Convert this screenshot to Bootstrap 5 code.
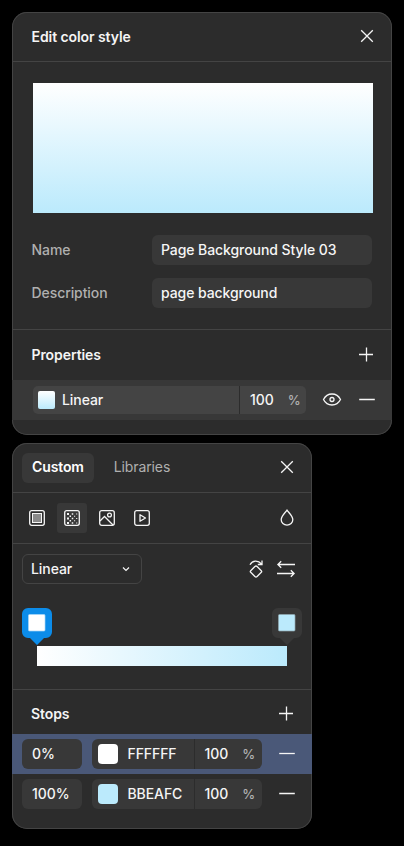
<!DOCTYPE html>
<html lang="en">
<head>
<meta charset="utf-8">
<meta name="viewport" content="width=device-width, initial-scale=1">
<title>Edit color style</title>
<link href="https://cdn.jsdelivr.net/npm/bootstrap@5.3.0/dist/css/bootstrap.min.css" rel="stylesheet">
<style>
body{background:#000;color:#f5f5f5;font:500 14px/20px Inter,sans-serif;letter-spacing:-.08px;overflow:hidden}
.panel{background:#2c2c2c;padding:1px;box-shadow:inset 0 0 0 1px #444;border-radius:15px;overflow:hidden}
.panel-style{width:380px;height:423px}
.panel-picker{width:300px;height:386px}
.line{border-bottom:1px solid #444}
.bold{font-weight:600}
.muted{color:#b0b0b0}
.pct{color:#b0b0b0;font-size:13px;margin-left:14px}
.ico{width:30px;height:30px;flex:none;display:flex;align-items:center;justify-content:center;background:none;border:0;padding:0;border-radius:3px;color:#f5f5f5}
.ico svg{width:20px;height:20px;fill:none;stroke:currentColor;stroke-width:1.3;display:block}
.ico.on,.tab.on,.field,.num{background:#383838}
.h49{height:49px}.h50{height:50px}.h51{height:51px}
.preview{height:130px;margin:21px 18px 22px 20px;background:linear-gradient(#fff,#bbeafc)}
.field{width:220px;height:30px;border-radius:6px;padding:5px 9px;margin-right:19px}
.tab{height:30px;border:0;border-radius:6px;background:none;padding:4px 10px 6px;letter-spacing:-.12px}
.prop{height:40px;background:#383838;padding-left:21px;margin:0 -1px}
.group{display:flex;border-radius:5px;overflow:hidden}
.group>div{display:flex;align-items:center}
.prop .group{width:273px;height:28px;background:#444}
.prop .name{width:207px;border-right:1px solid #2c2c2c;padding-left:5px}
.swatch{border-radius:2px;flex:none}
.prop .swatch{width:17px;height:18px;background:linear-gradient(#fff,#bbeafc);margin-right:7px}
.pick{width:120px;height:30px;border:1px solid #444;border-radius:6px;padding:0 10px 0 8px}
.pick svg{width:10px;height:10px;fill:none;stroke:#f5f5f5;stroke-width:1.2}
.pins{height:38px;margin-top:14px;padding:0 9px}
.pin{width:30px;height:37px;color:#383838}
.pin.on{color:#0c8ce9}
.ramp{height:20px;width:250px;margin-left:24px;background:linear-gradient(90deg,#fff,#bbeafc)}
.stop{height:40px;padding:0 10px;margin:0 -1px}
.stop.on{background:#4a5878}
.num{width:60px;height:30px;border-radius:6px;padding:5px 10px;margin-right:10px}
.stop .group{width:170px;height:30px;background:#383838;border-radius:6px}
.stop .name{width:103px;border-right:1px solid #2c2c2c;padding-left:6px}
.stop .swatch{width:20px;height:20px;border-radius:4px;margin-right:9.5px}
.sw-a{background:#fff}.sw-b{background:#bbeafc}
</style>
<script src="https://cdn.jsdelivr.net/npm/bootstrap@5.3.0/dist/js/bootstrap.bundle.min.js"></script>
</head>
<body>
<main class="d-flex flex-column" style="padding:12px;gap:8px">
<section class="panel panel-style">
  <header class="line d-flex align-items-center justify-content-between h49" style="padding:0 9px 0 18.500px">
    <span class="bold">Edit color style</span>
    <button class="ico" aria-label="Close"><svg viewBox="0 0 20 20"><path d="M4.200 3.200l11.600 11.600M15.800 3.200L4.200 14.800"/></svg></button>
  </header>
  <div class="preview"></div>
  <div class="d-flex align-items-center justify-content-between" style="margin-left:18.500px"><span class="muted">Name</span><div class="field">Page Background Style 03</div></div>
  <div class="d-flex align-items-center justify-content-between" style="margin:13px 0 0 18.500px"><span class="muted">Description</span><div class="field">page background</div></div>
  <div class="line" style="height:22px"></div>
  <div class="d-flex align-items-center justify-content-between h50" style="padding:0 10px 0 18.500px">
    <span class="bold">Properties</span>
    <button class="ico" aria-label="Add"><svg viewBox="0 0 20 20"><path d="M3 9.500h14M10.500 2.500v14"/></svg></button>
  </div>
  <div class="prop d-flex align-items-center">
    <div class="group"><div class="name"><span class="swatch"></span>Linear</div><div style="padding-left:10px"><span>100</span><span class="pct">%</span></div></div>
    <button class="ico" style="margin-left:11px" aria-label="Hide"><svg viewBox="0 0 20 20"><path d="M1.500 9.500C3.300 5.900 6.300 4 10 4s6.700 1.900 8.500 5.500C16.700 13.100 13.700 15 10 15s-6.700-1.900-8.500-5.500z"/><circle cx="10" cy="9.500" r="2"/></svg></button>
    <button class="ico" style="margin-left:5px" aria-label="Remove"><svg viewBox="0 0 20 20"><path d="M2.200 9.500h15.600"/></svg></button>
  </div>
</section>

<section class="panel panel-picker">
  <header class="line d-flex align-items-center h49" style="padding:0 9px">
    <button class="tab on bold text-white">Custom</button>
    <button class="tab muted" style="margin-left:10px">Libraries</button>
    <button class="ico ms-auto" aria-label="Close"><svg viewBox="0 0 20 20"><path d="M4.200 3.200l11.600 11.600M15.800 3.200L4.200 14.800"/></svg></button>
  </header>
  <div class="line d-flex align-items-center h51" style="padding:0 9px;gap:5px">
    <button class="ico" aria-label="Solid"><svg viewBox="0 0 20 20"><rect x="2.700" y="2.700" width="14.600" height="14.600" rx="2"/><rect x="5.500" y="5.500" width="9" height="9" fill="#8a8a8a" stroke-width="1"/></svg></button>
    <button class="ico on" aria-label="Gradient"><svg viewBox="0 0 20 20"><rect x="2.700" y="2.700" width="14.600" height="14.600" rx="2"/><path stroke-width="2" stroke-dasharray="2 2.500" d="M6 5v11"/><path stroke-width="1.500" stroke-dasharray="1.500 3" d="M8.300 7.500v8M10.500 5.200v10.600"/><path stroke-width="1.100" stroke-dasharray="1.100 3.400" d="M12.600 7.700v8M14.700 5.400v10.600"/></svg></button>
    <button class="ico" aria-label="Image"><svg viewBox="0 0 20 20"><rect x="2.700" y="2.700" width="14.600" height="14.600" rx="2"/><circle cx="12.500" cy="7" r="1.900"/><path d="M3 13l4.500-4.500 8.500 8.500"/></svg></button>
    <button class="ico" aria-label="Video"><svg viewBox="0 0 20 20"><rect x="2.700" y="2.700" width="14.600" height="14.600" rx="2"/><path stroke-linejoin="round" d="M8 6.700v6.600l5.500-3.300z"/></svg></button>
    <button class="ico ms-auto" aria-label="Blend mode"><svg viewBox="0 0 20 20"><path d="M10 2.200C8 5 4.200 8 4.200 11.700a5.800 5.500 0 0 0 11.600 0C15.800 8 12 5 10 2.200z"/></svg></button>
  </div>
  <div class="d-flex align-items-center" style="height:50px;padding:0 10px 0 9px">
    <div class="pick d-flex align-items-center justify-content-between">Linear<svg viewBox="0 0 10 10"><path d="M2 3.500l3 3 3-3"/></svg></div>
    <button class="ico ms-auto" aria-label="Rotate"><svg viewBox="0 0 20 20"><path stroke-linejoin="round" d="M8.900 7.500q1.100-1 2.200 0l4.200 4.200q.8.800 0 1.600l-4.200 4.200q-1.100 1-2.200 0l-4.200-4.200q-.8-.8 0-1.600z"/><path d="M4 5.700C6.500 1.200 12 .8 15.500 5M16 1.500v4h-4.200"/></svg></button>
    <button class="ico" aria-label="Flip"><svg viewBox="0 0 20 20"><path d="M19 5.500H2M5.200 2.200L1.900 5.500l3.300 3.300M1 14.500h17M14.800 11.200l3.300 3.300-3.300 3.300"/></svg></button>
  </div>
  <div class="pins d-flex justify-content-between">
    <svg class="pin on" viewBox="0 0 30 37"><path fill="currentColor" d="M6 0h18a6 6 0 0 1 6 6v18a6 6 0 0 1-6 6h-2l-7 7-7-7H6a6 6 0 0 1-6-6V6a6 6 0 0 1 6-6z"/><rect x="6.500" y="6.500" width="16.500" height="16.500" rx="1" fill="#fff" stroke="#a9d7f8" stroke-width=".7"/></svg>
    <svg class="pin" viewBox="0 0 30 37"><path fill="currentColor" d="M6 0h18a6 6 0 0 1 6 6v18a6 6 0 0 1-6 6h-2l-7 7-7-7H6a6 6 0 0 1-6-6V6a6 6 0 0 1 6-6z"/><rect x="6.500" y="6.500" width="16.500" height="16.500" rx="1" fill="#bbeafc" stroke="#8fa7b0" stroke-width=".7"/></svg>
  </div>
  <div class="ramp"></div>
  <div class="line" style="height:24px"></div>
  <div class="d-flex align-items-center justify-content-between" style="height:44px;padding:4px 10px 0 18px">
    <span class="bold">Stops</span>
    <button class="ico" aria-label="Add"><svg viewBox="0 0 20 20"><path d="M3 9.500h14M10.500 2.500v14"/></svg></button>
  </div>
  <div class="stop on d-flex align-items-center">
    <div class="num">0%</div>
    <div class="group"><div class="name"><span class="swatch sw-a"></span>FFFFFF</div><div style="padding-left:9.500px"><span>100</span><span class="pct">%</span></div></div>
    <button class="ico ms-auto" aria-label="Remove"><svg viewBox="0 0 20 20"><path d="M2.200 9.500h15.600"/></svg></button>
  </div>
  <div class="stop d-flex align-items-center">
    <div class="num">100%</div>
    <div class="group"><div class="name"><span class="swatch sw-b"></span>BBEAFC</div><div style="padding-left:9.500px"><span>100</span><span class="pct">%</span></div></div>
    <button class="ico ms-auto" aria-label="Remove"><svg viewBox="0 0 20 20"><path d="M2.200 9.500h15.600"/></svg></button>
  </div>
</section>
</main>
</body>
</html>
